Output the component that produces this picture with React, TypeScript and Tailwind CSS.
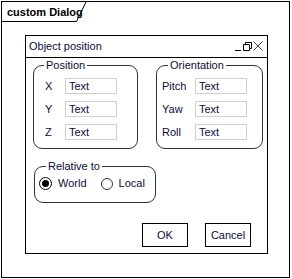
import React from "react";

function Field({ label, labelWidth }: { label: string; labelWidth: string }) {
  return (
    <div className="flex items-center h-[16px]">
      <span className={`${labelWidth} text-[11px] leading-[16px]`}>{label}</span>
      <div className="w-[52px] h-[16px] border border-[#cfcfcf] pl-[3px] text-[11px] leading-[14px]">
        Text
      </div>
    </div>
  );
}

function Radio({ label, checked }: { label: string; checked?: boolean }) {
  return (
    <div className="flex items-center">
      <span
        className={
          checked
            ? "w-[13px] h-[13px] rounded-full border border-black flex items-center justify-center"
            : "w-[12px] h-[12px] rounded-full border border-[#333]"
        }
      >
        {checked && <span className="w-[7px] h-[7px] rounded-full bg-black" />}
      </span>
      <span className="ml-[6px] text-[11px] leading-[13px]">{label}</span>
    </div>
  );
}

export default function App() {
  return (
    <div className="w-[292px] h-[279px] bg-white p-px font-['Liberation_Sans',sans-serif] text-[#0c0c3c]">
      <div className="w-[289px] h-[277px] border border-black flex flex-col">
        <div className="relative h-[20px] w-[86px]">
          <svg className="absolute left-0 top-0" width="86" height="20">
            <path d="M0 19.5H74.5L84.5 -1" fill="none" stroke="#000" strokeWidth="1" />
          </svg>
          <span className="absolute left-[5px] top-[3px] whitespace-nowrap text-[11px] font-bold leading-[14px] text-black">
            custom Dialog
          </span>
        </div>

        <div className="ml-[23px] mt-[13px] w-[243px] h-[219px] border border-black flex flex-col">
          <div className="h-[22px] border-b border-black flex items-center justify-between pl-[3px] pr-[4px] pb-[2px]">
            <span className="text-[11px] leading-[14px]">Object position</span>
            <svg width="28" height="12" viewBox="0 0 28 12">
              <path d="M0 10.5H6" stroke="#000" strokeWidth="1" />
              <path d="M8.5 4.5H14.5V10.5H8.5Z M10.5 4.5V2.5H16.5V8.5H14.5" fill="none" stroke="#000" strokeWidth="1" />
              <path d="M18.5 1.5L27.5 10.5M27.5 1.5L18.5 10.5" stroke="#333" strokeWidth="0.9" />
            </svg>
          </div>

          <div className="flex mt-px ml-[7px]">
            <fieldset className="w-[105px] h-[90px] border border-[#333] rounded-[9px] pl-[11px]">
              <legend className="px-[2px] -ml-[1px] text-[11px] leading-[12px]">Position</legend>
              <div className="flex flex-col gap-[7px] pt-[7px]">
                <Field label="X" labelWidth="w-[20px]" />
                <Field label="Y" labelWidth="w-[20px]" />
                <Field label="Z" labelWidth="w-[20px]" />
              </div>
            </fieldset>
            <fieldset className="ml-[18px] w-[107px] h-[90px] border border-[#333] rounded-[9px] pl-[5px]">
              <legend className="px-[2px] ml-[6px] text-[11px] leading-[12px]">Orientation</legend>
              <div className="flex flex-col gap-[7px] pt-[7px]">
                <Field label="Pitch" labelWidth="w-[33px]" />
                <Field label="Yaw" labelWidth="w-[33px]" />
                <Field label="Roll" labelWidth="w-[33px]" />
              </div>
            </fieldset>
          </div>

          <fieldset className="mt-[11px] ml-[8px] w-[122px] h-[43px] border border-[#333] rounded-[9px] pl-[4px]">
            <legend className="px-[2px] ml-[7px] text-[11px] leading-[12px]">Relative to</legend>
            <div className="flex items-center gap-[14px] pt-[5px]">
              <Radio label="World" checked />
              <Radio label="Local" />
            </div>
          </fieldset>

          <div className="flex justify-end gap-[17px] mt-[20px] mr-[16px]">
            <button className="w-[46px] h-[24px] border border-black bg-white text-[11px]">OK</button>
            <button className="w-[46px] h-[24px] border border-black bg-white text-[11px]">Cancel</button>
          </div>
        </div>
      </div>
    </div>
  );
}
